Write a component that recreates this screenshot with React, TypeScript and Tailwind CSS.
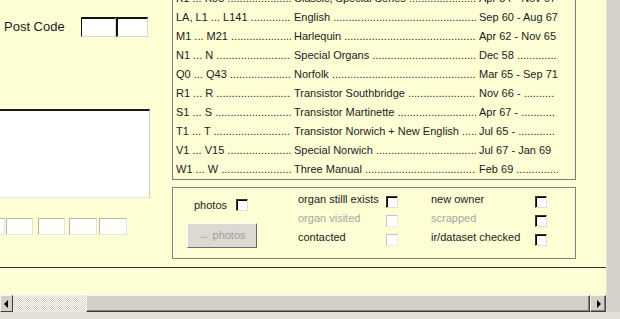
const rows = [
  ['K1 ... K55', 'Classic, Special Series', 'Apr 54 - Nov 67'],
  ['LA, L1 ... L141', 'English', 'Sep 60 - Aug 67'],
  ['M1 ... M21', 'Harlequin', 'Apr 62 - Nov 65'],
  ['N1 ... N', 'Special Organs', 'Dec 58 ............................'],
  ['Q0 ... Q43', 'Norfolk', 'Mar 65 - Sep 71'],
  ['R1 ... R', 'Transistor Southbridge', 'Nov 66 - ..........'],
  ['S1 ... S', 'Transistor Martinette', 'Apr 67 - ...........'],
  ['T1 ... T', 'Transistor Norwich + New English', 'Jul 65 - ............'],
  ['V1 ... V15', 'Special Norwich', 'Jul 67 - Jan 69'],
  ['W1 ... W', 'Three Manual', 'Feb 69 ............................'],
];

const dots = ' ..............................................................................';

function Check({ light }: { light?: boolean }) {
  return light ? (
    <div className="w-[12px] h-[12px] mt-[4px] bg-white border border-t-[#c4c4c4] border-l-[#c4c4c4] border-r-[#ececec] border-b-[#ececec]" />
  ) : (
    <div className="w-[12px] h-[12px] mt-[4px] bg-white border border-t-[#333] border-l-[#333] border-r-[#dedede] border-b-[#dedede] shadow-[inset_1px_1px_0_#000]" />
  );
}

function Row({ label, gray, light, w }: { label: string; gray?: boolean; light?: boolean; w: string }) {
  return (
    <div className="h-[19px] flex items-center">
      <span className={`${w} whitespace-nowrap ${gray ? 'text-[#a6a6a6]' : ''}`}>{label}</span>
      <Check light={light} />
    </div>
  );
}

function Arrow({ dir }: { dir: 'left' | 'right' }) {
  return (
    <svg width="5" height="8" viewBox="0 0 5 8">
      {dir === 'left' ? <polygon points="4,0 4,8 0,4" fill="#000" /> : <polygon points="1,0 1,8 5,4" fill="#000" />}
    </svg>
  );
}

export default function App() {
  return (
    <div className="w-[620px] h-[319px] overflow-hidden bg-[#e2dfd9] font-['Liberation_Sans',Arial,sans-serif] text-[#1c1c1c] flex flex-col">
      <div className="flex h-[312px]">
        <div className="w-[606px] flex flex-col">
          <div className="h-[295px] bg-[#fefed5] flex flex-col overflow-hidden">
            <div className="flex h-[267px]">
              {/* left column */}
              <div className="w-[172px] flex flex-col">
                <div className="mt-[17px] h-[20px] flex items-center">
                  <span className="ml-[4px] w-[77px] text-[13px]">Post Code</span>
                  <div className="w-[35px] h-[20px] bg-white border-t-2 border-l border-t-[#111] border-l-[#111] border-r border-b border-r-[#d8d8d8] border-b-[#d8d8d8]" />
                  <div className="w-[32px] h-[20px] bg-white border-t-2 border-l-2 border-t-[#111] border-l-[#111] border-r border-b border-r-[#d8d8d8] border-b-[#d8d8d8]" />
                </div>
                <div className="mt-[72px] h-[89px] w-[150px] bg-white border-t-2 border-t-[#1a1a1a] border-r border-r-[#cfcfcf] border-b border-b-[#e6e6e6]" />
                <div className="mt-[20px] h-[17px] flex">
                  <div className="-ml-[22px] w-[27px] bg-[#fffffa] border border-t-[#b4b4b4] border-l-[#b4b4b4] border-r-[#e4e4e4] border-b-[#e4e4e4]" />
                  <div className="ml-[1px] w-[27px] bg-[#fffffa] border border-t-[#b4b4b4] border-l-[#b4b4b4] border-r-[#e4e4e4] border-b-[#e4e4e4]" />
                  <div className="ml-[5px] w-[27px] bg-[#fffffa] border border-t-[#b4b4b4] border-l-[#b4b4b4] border-r-[#e4e4e4] border-b-[#e4e4e4]" />
                  <div className="ml-[4px] w-[28px] bg-[#fffffa] border border-t-[#b4b4b4] border-l-[#b4b4b4] border-r-[#e4e4e4] border-b-[#e4e4e4]" />
                  <div className="ml-[2px] w-[28px] bg-[#fffffa] border border-t-[#b4b4b4] border-l-[#b4b4b4] border-r-[#e4e4e4] border-b-[#e4e4e4]" />
                </div>
              </div>

              {/* right column */}
              <div className="w-[404px] flex flex-col">
                <div className="-mt-[12px] border border-[#7c7c7c] text-[11px]">
                  {rows.map(([code, desc, date]) => (
                    <div key={code} className="h-[19px] leading-[19px] flex pl-[3px]">
                      <div className="w-[115px] mr-[3px] overflow-hidden whitespace-nowrap">{code + dots}</div>
                      <div className="w-[182px] mr-[3px] overflow-hidden whitespace-nowrap">{desc + dots}</div>
                      <div className="w-[79px] overflow-hidden whitespace-nowrap">{date}</div>
                    </div>
                  ))}
                </div>

                <div className="mt-[7px] h-[72px] border border-[#808080] shadow-[inset_1px_1px_0_#fff] flex text-[11px]">
                  <div className="ml-[14px] w-[70px] flex flex-col">
                    <div className="mt-[11px] h-[12px] flex items-center">
                      <span className="pl-[7px] w-[49px] whitespace-nowrap">photos</span>
                      <div className="w-[12px] h-[12px] bg-white border border-t-[#333] border-l-[#333] border-r-[#dedede] border-b-[#dedede] shadow-[inset_1px_1px_0_#000]" />
                    </div>
                    <div className="mt-[12px] h-[25px] w-[70px] bg-[#dcd9d3] border border-t-[#fafafa] border-l-[#fafafa] border-r-[#6a6a6a] border-b-[#6a6a6a] flex items-center justify-center text-[#9c9c9c] text-[11px]">
                      → photos
                    </div>
                  </div>
                  <div className="ml-[41px] pt-[2px] flex flex-col">
                    <Row label="organ stilll exists" w="w-[88px]" />
                    <Row label="organ visited" gray light w="w-[88px]" />
                    <Row label="contacted" light w="w-[88px]" />
                  </div>
                  <div className="ml-[33px] pt-[2px] flex flex-col">
                    <Row label="new owner" w="w-[104px]" />
                    <Row label="scrapped" gray w="w-[104px]" />
                    <Row label="ir/dataset checked" w="w-[104px]" />
                  </div>
                </div>
              </div>
            </div>
            <div className="h-px bg-[#2e2e2e]" />
          </div>

          {/* horizontal scrollbar */}
          <div className="h-[17px] flex bg-[#d4d0c8]">
            <div className="w-[13px] border border-t-[#f4f4f4] border-l-[#f4f4f4] border-r-[#404040] border-b-[#404040] flex items-center justify-center">
              <Arrow dir="left" />
            </div>
            <div className="w-[73px] bg-[repeating-conic-gradient(#ffffff_0_25%,#d4d0c8_0_50%)] bg-[length:2px_2px] border-t border-t-[#f0f0f0]" />
            <div className="flex-1 border border-t-[#f4f4f4] border-l-[#f4f4f4] border-r-[#404040] border-b-[#404040] shadow-[inset_-1px_-1px_0_#808080]" />
            <div className="w-[16px] border border-t-[#f4f4f4] border-l-[#f4f4f4] border-r-[#404040] border-b-[#404040] shadow-[inset_-1px_-1px_0_#808080] flex items-center justify-center">
              <Arrow dir="right" />
            </div>
          </div>
        </div>
        <div className="w-[14px] bg-[#d6d2cb] border-l border-l-[#e4e1db]" />
      </div>
      <div className="h-[7px] bg-[#e2dfd9]" />
    </div>
  );
}
